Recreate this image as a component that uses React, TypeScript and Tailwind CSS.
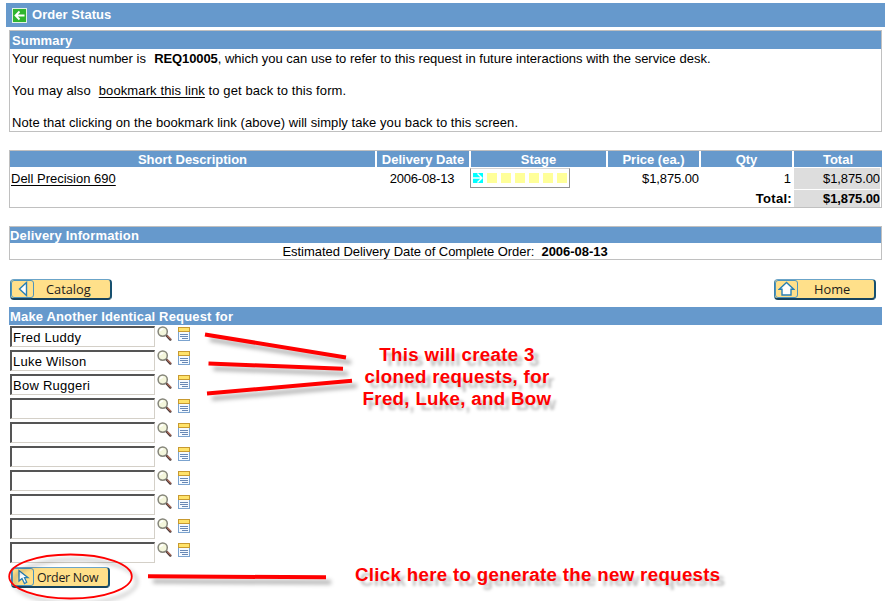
import type { ReactNode } from "react";

const sans = "font-['Liberation_Sans',Arial,sans-serif]";

function MagnifierIcon() {
  return (
    <svg width="16" height="16" viewBox="0 0 16 16" className="block shrink-0">
      <path d="M9.5 9.5 L13.4 13.6" stroke="#4a3a38" strokeWidth="2.4" strokeLinecap="round" />
      <path d="M10.4 9.9 L13.6 13" stroke="#b8705f" strokeWidth="1.1" strokeLinecap="round" />
      <circle cx="5.7" cy="5.6" r="4.6" fill="#f4f6dc" stroke="#85857a" strokeWidth="1.5" />
      <path d="M3.4 5.2 A2.6 2.6 0 0 1 6.2 3" fill="none" stroke="#fff" strokeWidth="1.3" />
    </svg>
  );
}

function FormIcon() {
  return (
    <svg width="12" height="14" viewBox="0 0 12 14" className="block shrink-0" shapeRendering="crispEdges">
      <rect width="12" height="14" fill="#7ba3cf" />
      <rect x="1" y="5" width="10" height="8" fill="#f5faff" />
      <rect width="12" height="5" fill="#c89a30" />
      <rect x="1" y="1" width="10" height="3" fill="#ffe36a" />
      <path d="M2 7.5H10M2 9.5H10M4 11.5H10" stroke="#6888b5" />
    </svg>
  );
}

function ImageButton({ icon, label, className, cell, text }: { icon: ReactNode; label: string; className: string; cell: string; text: string }) {
  return (
    <button
      className={`flex h-[21px] overflow-hidden rounded-[4px] border border-t-[#6ba4c8] border-r-2 border-r-[#17506f] border-b-2 border-b-[#17445f] border-l-[#3c83ad] bg-[#ffe08a] font-['Open_Sans','Noto_Sans',sans-serif] leading-[19px] whitespace-nowrap text-[#1c1c1c] ${className}`}
    >
      <span className={`flex h-[18px] shrink-0 items-center justify-center rounded-[3px] border border-[#4c94bd] ${cell}`}>{icon}</span>
      <span className={text}>{label}</span>
    </button>
  );
}

const names = ["Fred Luddy", "Luke Wilson", "Bow Ruggeri", "", "", "", "", "", "", ""];
const header = "bg-[#6699cc] font-bold text-white";

export default function App() {
  return (
    <div className={`relative h-[601px] w-[890px] overflow-hidden bg-white text-[13px] leading-4 text-black ${sans}`}>
      <div className="pt-[3px] pr-[5px] pl-[6px]">
        <div className={`flex h-6 items-center pl-[6px] ${header}`}>
          <svg width="15" height="15" viewBox="0 0 15 15" className="block">
            <rect x=".5" y=".5" width="14" height="14" fill="#2fb52f" stroke="#e2f4e2" />
            <path d="M12.5 7.5H4M7.5 3.5L3.5 7.5L7.5 11.5" fill="none" stroke="#fff" strokeWidth="1.8" />
          </svg>
          <h1 className="ml-[5px] tracking-[0.05px]">Order Status</h1>
        </div>
      </div>

      <div className="pr-2 pl-[9px]">
        <section className="mt-[3px] h-[102px] border border-[#c0c0c0]">
          <h2 className={`h-[18px] pl-[2px] leading-[19px] tracking-[0.15px] ${header}`}>Summary</h2>
          <div className="pt-[2px] pl-[2px] whitespace-pre">
            <p><span>Your request number is  </span><b className="ml-px tracking-[-0.1px]">REQ10005</b><span>, which you can use to refer to this request in future interactions with the service desk.</span></p>
            <p className="mt-4 tracking-[0.1px]">You may also  <a className="ml-[0.5px] tracking-[0.12px] underline underline-offset-2">bookmark this link</a> to get back to this form.</p>
            <p className="mt-4 tracking-[0.06px]">Note that clicking on the bookmark link (above) will simply take you back to this screen.</p>
          </div>
        </section>

        <section className="mt-[18px] h-[58px] border border-[#c0c0c0]">
          <div className="grid h-4 grid-cols-[365px_92px_135px_91px_91px_88px] gap-x-[2px] text-center leading-[17px] text-white">
            {["Short Description", "Delivery Date", "Stage", "Price (ea.)", "Qty", "Total"].map((h) => (
              <div key={h} className={`h-4 ${header}`}>{h}</div>
            ))}
          </div>
          <div className="mt-px grid h-5 grid-cols-[365px_92px_135px_91px_91px_86px] gap-x-[2px] leading-[21px]">
            <div className="pl-px"><a className="underline underline-offset-2">Dell Precision 690</a></div>
            <div className="pr-[2px] text-center tracking-[-0.2px]">2006-08-13</div>
            <div className="-ml-px flex h-5 w-[100px] items-center gap-1 border border-t-[#d4d4d4] border-r-[#909090] border-b-[#909090] border-l-[#909090] pl-[2px]">
              <svg width="10" height="10" viewBox="0 0 10 10" className="block">
                <rect width="10" height="10" fill="#00ffff" />
                <path d="M0 5H9M4.5 .5L9 5L4.5 9.5" fill="none" stroke="#fff" strokeWidth="1.4" />
              </svg>
              {[0, 1, 2, 3, 4, 5].map((i) => <i key={i} className="block size-[10px] bg-[#ffff99]" />)}
            </div>
            <div className="text-right tracking-[-0.1px]">$1,875.00</div>
            <div className="pr-px text-right">1</div>
            <div className="bg-[#ddd] text-right tracking-[-0.1px]">$1,875.00</div>
          </div>
          <div className="mt-[2px] grid h-4 grid-cols-[782px_86px] gap-x-[2px] text-right leading-[17px] font-bold">
            <div className="tracking-[0.3px]">Total:</div>
            <div className="bg-[#ddd] tracking-[-0.1px]">$1,875.00</div>
          </div>
        </section>

        <section className="mt-[18px] h-[34px] border border-[#c0c0c0]">
          <h2 className={`h-4 leading-[18px] tracking-[0.17px] ${header}`}>Delivery Information</h2>
          <p className="pr-[2px] pl-[1px] text-center leading-[17px] tracking-[-0.04px] whitespace-pre">Estimated Delivery Date of Complete Order:  <b>2006-08-13</b></p>
        </section>

        <div className="mt-[19px] flex justify-between pr-[6px] pl-px">
          <ImageButton label="Catalog" className="w-[102px]" cell="w-[23px]" text="ml-[12px] text-[12.8px]" icon={
            <svg width="10" height="16" viewBox="0 0 10 16"><path d="M8.5 1.5V14.5L1.5 8Z" fill="#fff" stroke="#2880b5" strokeWidth="1.4" /></svg>
          } />
          <ImageButton label="Home" className="w-[102px]" cell="w-[23px]" text="ml-[16px] text-[12.8px]" icon={
            <svg width="17" height="16" viewBox="0 0 17 16"><path d="M8.5 1.5L1.3 8.3H4V14H13V8.3H15.7Z" fill="#fff" stroke="#2880b5" strokeWidth="1.4" /></svg>
          } />
        </div>

        <h2 className={`mt-[7px] h-[18px] pl-px leading-[19px] tracking-[0.16px] ${header}`}>Make Another Identical Request for</h2>
        <div className="flex flex-col gap-[3px] pt-px pl-px">
          {names.map((name, i) => (
            <div key={i} className="flex h-[21px] items-start">
              <input
                readOnly
                value={name}
                className="h-[21px] w-[145px] border-t-2 border-r border-b border-l-2 border-t-[#555] border-r-[#d4d0c8] border-b-[#d4d0c8] border-l-[#555] bg-white pt-px pl-px leading-4 tracking-[0.25px] outline-none"
              />
              <span className="ml-[2px]"><MagnifierIcon /></span>
              <span className="mt-px ml-[5px]"><FormIcon /></span>
            </div>
          ))}
        </div>
        <div className="mt-1 pl-[2px]">
          <ImageButton label="Order Now" className="w-[99px]" cell="w-[22px]" text="ml-[3px] text-[12.4px] tracking-[-0.3px]" icon={
            <svg width="13" height="16" viewBox="0 0 13 16"><path d="M2 1.5V12L5 9.5L7.5 14.5L9.7 13.3L7.5 8.7H11Z" fill="#fff" stroke="#2880b5" strokeWidth="1.3" /></svg>
          } />
        </div>
      </div>

      <svg width="890" height="601" className="pointer-events-none absolute inset-0 [filter:drop-shadow(5px_5px_2px_rgba(0,0,0,0.32))]" fill="none" stroke="#f00">
        <path d="M205 334.5L346 357.5M208.5 363.5L343 368.7M207 393.5L352 380.8M148 576.3L326 577.3" strokeWidth="4" />
        <ellipse cx="70.5" cy="576.5" rx="61.3" ry="22" strokeWidth="1.8" />
      </svg>
      <p className="absolute top-[344px] left-[337px] w-[240px] text-center text-[18.7px] leading-[22px] font-bold tracking-[0.32px] text-[#f00] [text-shadow:5px_5px_3px_rgba(0,0,0,0.25)]">
        This will create 3<br />cloned requests, for<br />Fred, Luke, and Bow
      </p>
      <p className="absolute top-[564px] left-[355px] text-[18.7px] leading-[22px] font-bold tracking-[0.32px] whitespace-nowrap text-[#f00] [text-shadow:5px_5px_3px_rgba(0,0,0,0.25)]">
        Click here to generate the new requests
      </p>
    </div>
  );
}
